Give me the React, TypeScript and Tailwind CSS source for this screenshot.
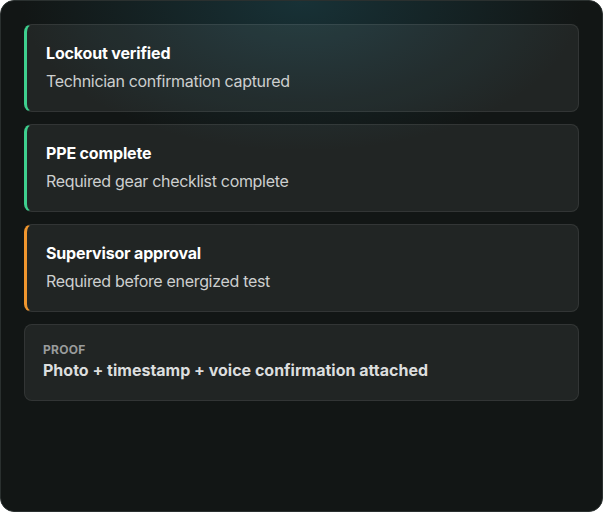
import React from 'react';

const checks = [
  { title: 'Lockout verified', detail: 'Technician confirmation captured', accent: 'border-l-[#3ecf8e]' },
  { title: 'PPE complete', detail: 'Required gear checklist complete', accent: 'border-l-[#3ecf8e]' },
  { title: 'Supervisor approval', detail: 'Required before energized test', accent: 'border-l-[#f0962e]' },
];

const App = () => {
  return (
    <div className="h-[512px] w-[603px] bg-white font-['Inter','Liberation_Sans',sans-serif]">
      <div className="h-full w-full rounded-[14px] border border-[#2a302f] bg-[#121615] bg-[radial-gradient(ellipse_280px_150px_at_50%_0%,rgba(28,72,82,0.55),transparent)] p-[23px]">
        <div className="flex flex-col gap-3">
          {checks.map((item, index) => (
            <div
              key={index}
              className={`rounded-lg border border-white/[0.08] border-l-[3px] ${item.accent} bg-white/[0.065] pt-4 pb-[18px] pl-[19px] pr-4`}
            >
              <div className="text-base font-bold leading-6 tracking-[-0.01em] text-white">{item.title}</div>
              <div className="mt-1 text-base leading-6 tracking-[-0.02em] text-[#cdcfcf]">{item.detail}</div>
            </div>
          ))}

          {/* Proof */}
          <div className="rounded-lg border border-white/[0.08] bg-white/[0.065] pt-[17px] pb-[18px] pl-[18px] pr-4">
            <div className="text-xs font-bold uppercase leading-4 tracking-wide text-[#999c9c]">Proof</div>
            <div className="text-base font-bold leading-6 text-[#dcdede]">
              Photo + timestamp + voice confirmation attached
            </div>
          </div>
        </div>
      </div>
    </div>
  );
};

export default App;
